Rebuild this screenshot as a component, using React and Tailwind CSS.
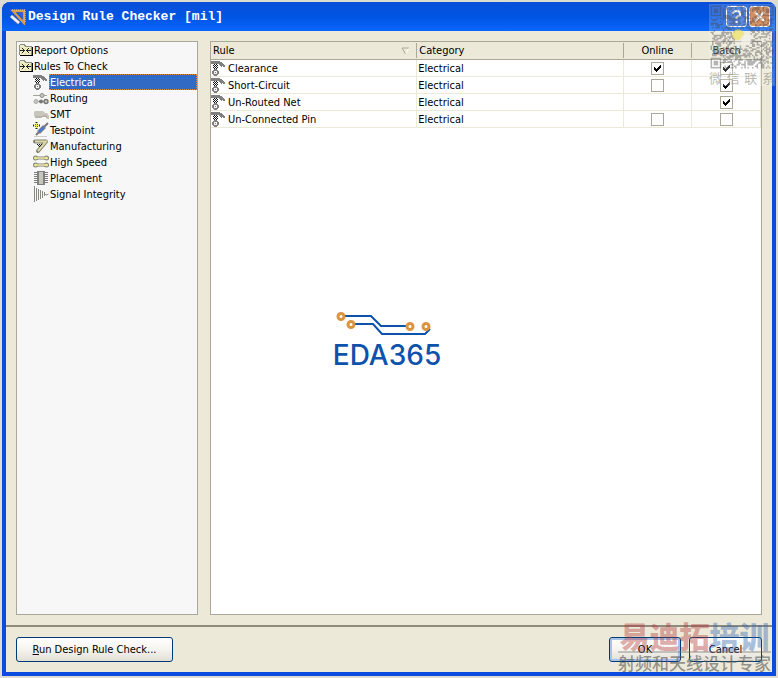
import React, { useState } from "react";

const RuleIcon = () => (
  <svg width="16" height="16" viewBox="0 0 16 16" className="shrink-0" shapeRendering="crispEdges">
    <path d="M0 1h9v1h2v1h1v1h1v1h1v2h-2V6h-1v1h-1V6H9V5H8V4H0z" fill="#808080" />
    <path
      d="M3 4h1v1H3zM5 4h1v1H5zM2 5h1v1H2zM4 5h1v1H4zM6 5h1v1H6zM3 6h1v1H3zM5 6h1v1H5zM2 7h1v1H2zM4 7h1v1H4zM6 7h1v1H6zM3 8h1v1H3zM5 8h1v1H5z"
      fill="#111"
    />
    <path d="M3 9h3v1h1v1h1v3H7v1H6v1H3v-1H2v-1H1v-3h1v-1h1z" fill="#808080" />
    <path d="M3 11h3v3H3z" fill="#f4f4f4" />
    <path d="M4 12h1v1H4z" fill="#808080" />
  </svg>
);

const FolderIcon = () => (
  <svg width="16" height="16" viewBox="0 0 16 16" className="shrink-0" shapeRendering="crispEdges">
    <path d="M2 14h13V5h-1v8H2z" fill="#000" />
    <path d="M1 3h1V2h5v1h1v1h6v9H1z" fill="#8c8c80" />
    <path d="M2 4V3h4v1h1v1h6v8H2z" fill="#efeec4" />
    <path d="M3 5h1v1H3zM7 6h1v1H7zM3 11h1v1H3zM7 11h1v1H7zM12 6h1v1h-1zM12 11h1v1h-1z" fill="#d9d68c" />
    <path d="M2 8h5v1H2zM4 6h1v1H4zM5 7h1v3H5zM4 10h1v1H4z" fill="#222" />
    <path d="M8 8h5v1H8zM10 6h1v1h-1zM9 7h1v3H9zM10 10h1v1h-1z" fill="#222" />
  </svg>
);

const RoutingIcon = () => (
  <svg width="16" height="16" viewBox="0 0 16 16" className="shrink-0">
    <path d="M0 5.500h14M1 11.500h13" stroke="#a5a59c" />
    <circle cx="9" cy="5.500" r="2" fill="#c8c6bc" stroke="#8d8d86" />
    <circle cx="3" cy="11.500" r="2" fill="#c8c6bc" stroke="#aaa" />
    <circle cx="8" cy="11.500" r="2" fill="#777" />
    <circle cx="13" cy="11.500" r="2" fill="#c8c6bc" stroke="#777" strokeWidth="1.4" />
  </svg>
);

const SmtIcon = () => (
  <svg width="16" height="16" viewBox="0 0 16 16" className="shrink-0">
    <path d="M2 5h8l2 2h2l2 3v3h-2l-1-2H9l-1 1H3l-2-2V6z" fill="#c8c5bb" />
    <path d="M2 11h7l1-1h3l1 2" fill="none" stroke="#a5a39b" />
  </svg>
);

const TestpointIcon = () => (
  <svg width="16" height="16" viewBox="0 0 16 16" className="shrink-0">
    <path d="M3 13L15 1" stroke="#777" strokeWidth="2" />
    <path d="M5.500 10.500l6-6" stroke="#808080" strokeWidth="4" />
    <path d="M6 10l5-5" stroke="#3e7be0" strokeWidth="2" />
    <path d="M3.500 0v7M0 3.500h7" stroke="#222" strokeWidth="2" strokeDasharray="1 1" />
    <path d="M3.500 1v5M1 3.500h5" stroke="#f2e650" />
    <path d="M1 14.500h13" stroke="#cfcdc5" />
  </svg>
);

const ManufacturingIcon = () => (
  <svg width="16" height="16" viewBox="0 0 16 16" className="shrink-0">
    <path d="M2 3.500h11L5 13" fill="none" stroke="#808078" strokeWidth="4" strokeLinejoin="round" strokeLinecap="round" />
    <path d="M2 3.500h11L5 13" fill="none" stroke="#dedaa0" strokeWidth="2" />
    <path d="M4 6h1v1H4zM6 6h1v1H6zM5 7h1v1H5zM7 7h1v1H7zM6 8h1v1H6zM8 6h1v1H8z" fill="#111" />
  </svg>
);

const HighSpeedIcon = () => (
  <svg width="16" height="16" viewBox="0 0 16 16" className="shrink-0">
    {[4, 11].map((y) => (
      <g key={y}>
        <path d={`M2 ${y}h12`} stroke="#808078" strokeWidth="3" />
        <circle cx="2.500" cy={y} r="2.500" fill="#808078" />
        <circle cx="13.500" cy={y} r="2.500" fill="#808078" />
        <path d={`M2 ${y}h12`} stroke="#eee9a4" strokeWidth="1.500" />
        <circle cx="2.500" cy={y} r="1.500" fill="#eee98a" />
        <circle cx="13.500" cy={y} r="1.500" fill="#eee98a" />
      </g>
    ))}
  </svg>
);

const PlacementIcon = () => (
  <svg width="16" height="16" viewBox="0 0 16 16" className="shrink-0" shapeRendering="crispEdges">
    <path d="M1 2h4v1H1zM1 4h4v1H1zM1 6h4v1H1zM1 8h4v1H1zM1 10h4v1H1zM1 12h4v1H1z" fill="#808080" />
    <path d="M11 2h4v1h-4zM11 4h4v1h-4zM11 6h4v1h-4zM11 8h4v1h-4zM11 10h4v1h-4zM11 12h4v1h-4z" fill="#808080" />
    <path d="M4 1h8v14H4z" fill="#808080" />
    <path d="M6 2h4v12H6z" fill="#c8c6bc" />
  </svg>
);

const SignalIcon = () => (
  <svg width="16" height="16" viewBox="0 0 16 16" className="shrink-0">
    <path
      d="M1.500 0v16M3.500 2v13M5.500 14V3M7.500 4v9M9.500 12V5M11.500 6v4M11.500 8l2 1 2-1"
      fill="none"
      stroke="#88887f"
    />
  </svg>
);

const AppIcon = () => (
  <svg width="16" height="16" viewBox="0 0 16 16" className="shrink-0">
    <path d="M3 2h11v12z" fill="none" stroke="#dd9a4c" strokeWidth="2.4" />
    <path d="M8 4h4v5z" fill="#2b66d8" />
    <path d="M1 7l8 7" stroke="#5d6f96" strokeWidth="4" />
    <path d="M1 7l8 7" stroke="#eef1f8" strokeWidth="2.6" />
    <path d="M2 1h13v13" fill="none" stroke="#f6cf8e" strokeDasharray="1 1" />
  </svg>
);

const treeItems = [
  { name: "Electrical", Icon: RuleIcon },
  { name: "Routing", Icon: RoutingIcon },
  { name: "SMT", Icon: SmtIcon },
  { name: "Testpoint", Icon: TestpointIcon },
  { name: "Manufacturing", Icon: ManufacturingIcon },
  { name: "High Speed", Icon: HighSpeedIcon },
  { name: "Placement", Icon: PlacementIcon },
  { name: "Signal Integrity", Icon: SignalIcon },
];

// null means the rule has no such check
const initialRules = [
  { name: "Clearance", category: "Electrical", online: true, batch: true },
  { name: "Short-Circuit", category: "Electrical", online: false, batch: true },
  { name: "Un-Routed Net", category: "Electrical", online: null, batch: true },
  { name: "Un-Connected Pin", category: "Electrical", online: false, batch: false },
];

const CheckBox = ({ label, checked, onChange }) => (
  <label className="relative mx-auto block size-[13px]">
    <input
      type="checkbox"
      aria-label={label}
      checked={checked}
      onChange={onChange}
      className="block size-[13px] appearance-none border border-[#aca899] bg-white"
    />
    {checked && (
      <svg viewBox="0 0 13 13" className="pointer-events-none absolute inset-0" shapeRendering="crispEdges">
        <path d="M3 5h1v1h1v1h1V6h1V5h1V4h1V3h1v3H9v1H8v1H7v1H6v1H5V9H4V8H3z" fill="#000" />
      </svg>
    )}
  </label>
);

const Logo = () => (
  <div className="pointer-events-none absolute top-[267px] left-[119px] w-[114px] text-center">
    <svg width="114" height="28" viewBox="0 0 114 28" className="block">
      <g fill="none" stroke="#0d52ab" strokeWidth="2">
        <path d="M15 7h26l10 10h27" />
        <path d="M25 15h18l9 10h43l5-5" />
      </g>
      <g fill="#fff" stroke="#dd9440" strokeWidth="3">
        <circle cx="11" cy="7.500" r="3" />
        <circle cx="21" cy="15.500" r="3" />
        <circle cx="80" cy="17.500" r="3" />
        <circle cx="96" cy="17.500" r="3" />
      </g>
    </svg>
    <div className="font-['Inter',sans-serif] text-[28px] leading-9 font-medium text-[#0d52ab]">EDA365</div>
  </div>
);

// QR style code: three finder squares plus a fixed noise pattern
const SIZE = 41;
const finders = [
  [0, 0],
  [SIZE - 7, 0],
  [0, SIZE - 7],
];
const modules = [];
let seed = 7;
for (let y = 0; y < SIZE; y++) {
  for (let x = 0; x < SIZE; x++) {
    seed = (seed * 1103515245 + 12345) % 2147483648;
    const inFinder = finders.some(([fx, fy]) => x >= fx - 1 && x <= fx + 7 && y >= fy - 1 && y <= fy + 7);
    const inCentre = x > 15 && x < 26 && y > 15 && y < 26;
    if (!inFinder && !inCentre && seed / 2147483648 > 0.5) modules.push(`M${x} ${y}h1v1h-1z`);
  }
}

const QrMark = () => (
  <div className="pointer-events-none absolute top-[2px] -right-[3px] w-[66px] bg-white/20">
    <svg viewBox="-1 -1 43 43" className="block w-full">
      <path d={modules.join("")} fill="#444" fillOpacity="0.4" />
      {finders.map(([x, y]) => (
        <g key={`${x}-${y}`} fillOpacity="0.4" strokeOpacity="0.4">
          <rect x={x + 0.5} y={y + 0.5} width="6" height="6" fill="none" stroke="#444" />
          <rect x={x + 2} y={y + 2} width="3" height="3" fill="#444" />
        </g>
      ))}
      <ellipse cx="18" cy="19" rx="4" ry="3.500" fill="#f0e060" fillOpacity="0.7" />
      <ellipse cx="23" cy="22" rx="3.500" ry="3" fill="#f2f2ee" fillOpacity="0.7" />
    </svg>
    <div className="flex justify-between font-['Noto_Sans_CJK_SC',sans-serif] text-[13px] leading-4 text-[#8a8a80]/60">
      <span>微</span>
      <span>信</span>
      <span>联</span>
      <span>系</span>
    </div>
  </div>
);

const TrainingMark = () => (
  <div className="pointer-events-none absolute right-[7px] bottom-[5px] text-center font-['Noto_Sans_CJK_SC',sans-serif] whitespace-nowrap">
    <div className="border-b-2 border-[#777]/40 text-[30px] leading-8 font-black text-[#b03030]/40">
      易迪拓<span className="text-[#2860b0]/40">培训</span>
    </div>
    <div className="text-[17px] leading-5 font-medium text-[#555]/60">射频和天线设计专家</div>
  </div>
);

const buttonClass =
  "h-[25px] rounded-[3px] border border-[#003c74] bg-linear-to-b from-white via-[#f5f4f0] to-[#e3dfd4] leading-4";
const headClass = "h-[18px] border-b border-[#aca899] p-0 font-normal";
const headTextClass = "flex h-[15px] items-center border-r border-[#aca899] px-0.5";
const cellClass = "h-[17px] border-r border-b border-[#ece9d8] p-0";

const App = () => {
  const [rules, setRules] = useState(initialRules);
  const [selected, setSelected] = useState("Electrical");

  const toggle = (name, key) => {
    setRules(rules.map((r) => (r.name === name ? { ...r, [key]: !r[key] } : r)));
  };

  return (
    <div className="flex min-h-screen flex-col bg-[#dedbd0] p-0.5 font-['DejaVu_Sans_Condensed','DejaVu_Sans',sans-serif] text-[11px] leading-[18px] text-black">
      <div className="relative flex grow flex-col rounded-t-lg border-x-4 border-b-4 border-[#0b4be0] bg-[#ece9d8]">
        {/* Title bar */}
        <header className="-mx-1 flex h-[29px] items-center justify-between rounded-t-lg bg-linear-to-b from-[#0a4fd8] via-[#0054e3] to-[#0a66fb] pr-1.5 pl-2">
          <div className="flex items-center gap-0.5">
            <AppIcon />
            <h1 className="font-['Liberation_Mono',monospace] text-[13px] font-bold whitespace-nowrap text-white">
              Design Rule Checker [mil]
            </h1>
          </div>
          <div className="flex gap-0.5">
            <button
              aria-label="Help"
              className="flex size-[21px] items-center justify-center rounded-[3px] border border-white bg-[#2f6fe0] text-white"
            >
              <svg width="13" height="15" viewBox="0 0 13 15" fill="none" stroke="#fff" strokeWidth="2">
                <path d="M3 5V3.500L5 2h3l2 1.500V6L6.500 8.500V10M6.500 12v2" />
              </svg>
            </button>
            <button
              aria-label="Close"
              className="flex size-[21px] items-center justify-center rounded-[3px] border border-white bg-[#c9753f] text-white"
            >
              <svg width="13" height="13" viewBox="0 0 13 13" stroke="#fff" strokeWidth="2">
                <path d="M2 2l9 9M11 2l-9 9" />
              </svg>
            </button>
          </div>
        </header>

        <main className="flex grow gap-3 p-2.5">
          {/* Rule tree */}
          <nav className="w-[182px] shrink-0 border border-[#aca899] bg-[#f7f7f7] pl-px">
            <div className="flex h-4">
              <FolderIcon />
              Report Options
            </div>
            <div className="flex h-4">
              <FolderIcon />
              Rules To Check
            </div>
            <ul className="pl-[15px]">
              {treeItems.map(({ name, Icon }) => (
                <li key={name} className="flex h-4">
                  <Icon />
                  <button
                    onClick={() => setSelected(name)}
                    className={
                      selected === name
                        ? "flex h-4 grow bg-[#316ac5] pl-px text-white outline-1 -outline-offset-1 outline-[#d98a3c] outline-dotted"
                        : "flex h-4 grow pl-px"
                    }
                  >
                    {name}
                  </button>
                </li>
              ))}
            </ul>
          </nav>

          {/* Rules table */}
          <section className="relative grow border border-[#aca899] bg-white">
            <table className="w-full table-fixed border-separate border-spacing-0">
              <colgroup>
                <col className="w-[37.5%]" />
                <col className="w-[37.5%]" />
                <col className="w-[12.5%]" />
                <col className="w-[12.5%]" />
              </colgroup>
              <thead>
                <tr className="bg-[#ece9d8]">
                  <th className={headClass}>
                    <div className={`${headTextClass} justify-between`}>
                      Rule
                      <svg width="13" height="8" viewBox="0 0 13 8" fill="none">
                        <path d="M8 1L4.500 7" stroke="#fff" />
                        <path d="M8 1H1l3.500 6" stroke="#aca899" />
                      </svg>
                    </div>
                  </th>
                  <th className={headClass}>
                    <div className={headTextClass}>Category</div>
                  </th>
                  <th className={headClass}>
                    <div className={`${headTextClass} justify-center`}>Online</div>
                  </th>
                  <th className={headClass}>
                    <div className="flex h-[15px] items-center justify-center">Batch</div>
                  </th>
                </tr>
              </thead>
              <tbody>
                {rules.map((rule) => (
                  <tr key={rule.name}>
                    <td className={cellClass}>
                      <div className="flex h-4 gap-px">
                        <RuleIcon />
                        {rule.name}
                      </div>
                    </td>
                    <td className={cellClass}>
                      <div className="h-4 pl-px">{rule.category}</div>
                    </td>
                    {["online", "batch"].map((key) => (
                      <td key={key} className={cellClass}>
                        {rule[key] !== null && (
                          <CheckBox
                            label={`${rule.name} ${key}`}
                            checked={rule[key]}
                            onChange={() => toggle(rule.name, key)}
                          />
                        )}
                      </td>
                    ))}
                  </tr>
                ))}
              </tbody>
            </table>
            <Logo />
          </section>
        </main>

        <footer className="flex justify-between border-t-2 border-[#8e8b7d] px-2.5 pt-2.5 pb-2.5">
          <button className={`${buttonClass} w-[157px]`}>
            <span className="underline">R</span>un Design Rule Check...
          </button>
          <div className="flex gap-2">
            <button className={`${buttonClass} w-[72px] shadow-[inset_0_0_0_2px_#a9c2ec]`}>OK</button>
            <button className={`${buttonClass} w-[73px]`}>Cancel</button>
          </div>
        </footer>

        <QrMark />
      </div>
      <TrainingMark />
    </div>
  );
};

export default App;
